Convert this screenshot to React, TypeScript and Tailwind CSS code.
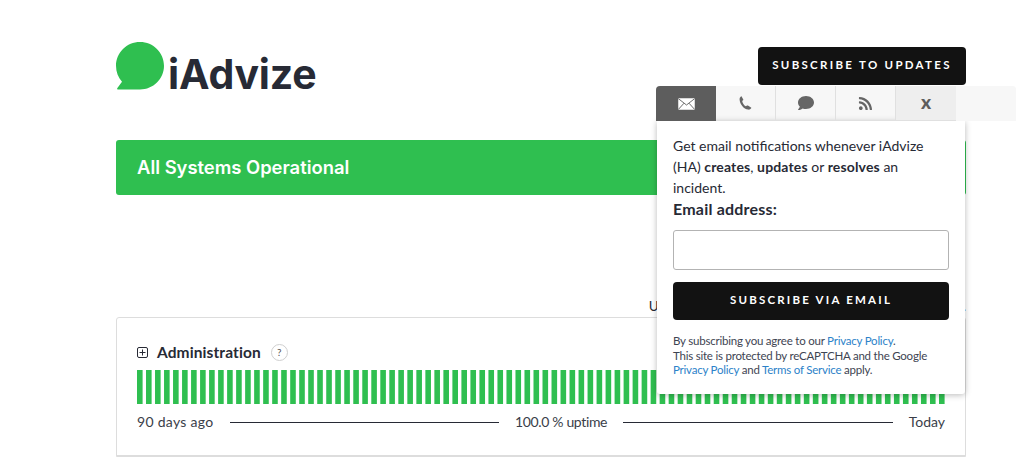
import React from "react";
import { FaComment, FaRss } from "react-icons/fa";

const bars = Array.from({ length: 90 }, (_, i) => i);

function Mail() {
  return (
    <svg width="17" height="12" viewBox="0 0 17 12" fill="none">
      <rect x="0.25" y="0.25" width="16.5" height="11.5" fill="#fff" />
      <path d="M0.3 0.6 L8.5 7 L16.7 0.6 M0.3 11.5 L6 5.2 M16.7 11.5 L11 5.2" stroke="#5d5d5d" strokeWidth="0.9" />
    </svg>
  );
}

function Phone() {
  return (
    <svg width="13" height="14" viewBox="0 0 13 14" fill="#666">
      <path d="M2.6 0.4 L4.3 3.4 C4.4 3.7 4.3 4 4 4.2 L3.2 4.9 C3.4 6.9 5 9.4 6.9 10.3 L8 9.6 C8.3 9.4 8.6 9.4 8.9 9.6 L12 11.5 C12.3 11.7 12.4 12 12.2 12.3 C11.4 13.3 10.4 13.8 9.2 13.6 C4.6 13 0.8 7.9 0.6 3.4 C0.5 2.2 1 1.2 1.9 0.4 C2.1 0.2 2.4 0.2 2.6 0.4 Z" />
    </svg>
  );
}

function Logo() {
  return (
    <div className="flex items-end">
      <svg width="48" height="48" viewBox="0 0 48 48" className="shrink-0">
        <path d="M24 0 C37.3 0 48 10.6 48 23.8 C48 37 37.3 47.5 24 47.5 L2.2 47.5 C1.2 47.5 0.8 46.6 1.4 45.9 L6 39.7 C2.2 35.5 0 30 0 23.8 C0 10.6 10.7 0 24 0 Z" fill="#2fbf50" />
      </svg>
      <span className="ml-[4px] mb-[-4px] font-['Inter',sans-serif] text-[41px] font-bold leading-[40px] tracking-[-0.2px] text-[#272a35]">iAdvize</span>
    </div>
  );
}

function Popover() {
  return (
    <div className="absolute right-0 top-[40px] z-10 w-[310px] pt-[4px]">
      <div className="flex h-[35px] w-[360px] rounded-t-[4px] bg-[#f7f7f7]">
        <div className="flex w-[60px] items-center justify-center rounded-tl-[4px] bg-[#5d5d5d]"><Mail /></div>
        <div className="flex w-[60px] items-center justify-center border-r border-b border-[#e0e0e0]"><Phone /></div>
        <div className="flex w-[60px] items-center justify-center border-r border-b border-[#e0e0e0] text-[#666]"><FaComment size={16} /></div>
        <div className="flex w-[60px] items-center justify-center border-r border-b border-[#e0e0e0] text-[#666]"><FaRss size={15} /></div>
        <div className="flex w-[60px] items-center justify-center border-b border-[#e0e0e0] bg-[#eeeeee] pb-[3px] text-[19px] font-black leading-none text-[#5d5d5d]">x</div>
        <div className="flex-1 rounded-tr-[4px] bg-[#f7f7f7]" />
      </div>
      <div className="ml-[1px] h-[273px] w-[308px] rounded-b-[3px] bg-white px-[16px] pt-[14px] text-[#272a35] shadow-[0_1px_6px_rgba(0,0,0,0.28)]">
        <p className="text-[14px] leading-[21px]">
          Get email notifications whenever iAdvize (HA) <b className="font-bold tracking-[0.15px]">creates</b>, <b className="font-bold tracking-[0.15px]">updates</b> or <b className="font-bold tracking-[0.15px]">resolves</b> an incident.
        </p>
        <label className="block text-[16px] font-bold leading-[21px] tracking-[0.2px]">Email address:</label>
        <div className="mt-[11px] h-[40px] rounded-[3px] border border-[#b3b3b3] bg-white" />
        <button className="mt-[12px] h-[38px] w-full rounded-[4px] bg-[#121212] pb-[2px] text-[11.5px] font-bold tracking-[2.2px] text-white">SUBSCRIBE VIA EMAIL</button>
        <p className="mt-[14px] text-[11.5px] leading-[14.5px] tracking-[-0.22px] text-[#3e4452]">
          By subscribing you agree to our <span className="text-[#2c82c9]">Privacy Policy</span>.<br />
          This site is protected by reCAPTCHA and the Google<br />
          <span className="text-[#2c82c9]">Privacy Policy</span> and <span className="text-[#2c82c9]">Terms of Service</span> apply.
        </p>
      </div>
    </div>
  );
}

export default function App() {
  return (
    <div className="h-[458px] w-[1017px] overflow-hidden bg-white font-['Lato',sans-serif] text-[#272a35]">
      <div className="ml-[116px] w-[850px] pt-[42px]">
        <header className="relative flex items-start justify-between">
          <Logo />
          <div className="mt-[5px]">
            <button className="h-[38px] w-[208px] rounded-[4px] bg-[#121212] pb-[2px] text-[11.5px] font-bold tracking-[2.3px] text-white">SUBSCRIBE TO UPDATES</button>
          </div>
          <Popover />
        </header>

        <div className="mt-[50px] flex h-[55px] items-center rounded-[3px] bg-[#2fbf50] px-[21px] font-['Inter',sans-serif] text-[18.4px] font-semibold text-white">All Systems Operational</div>

        <div className="mt-[100px] h-[22px] text-right text-[13.6px] leading-[22px]">Uptime over the past 90 days. View historical uptime.</div>

        <div className="rounded-t-[3px] border border-[#dddddd]">
          <div className="h-[138px] border-b border-[#dddddd] px-[20px] pt-[24px]">
            <div className="flex h-[21px] items-center">
              <svg width="11" height="11" viewBox="0 0 11 11" fill="none" stroke="#272a35" strokeWidth="1" className="mr-[9px]">
                <rect x="0.5" y="0.5" width="10" height="10" rx="1.5" />
                <path d="M5.5 2.5 V8.5 M2.5 5.5 H8.5" />
              </svg>
              <span className="text-[15.5px] font-bold leading-[21px] tracking-[0.1px] mt-[-1px]">Administration</span>
              <span className="ml-[10px] flex h-[17px] w-[17px] items-center justify-center rounded-full border border-[#cfcfcf] text-[10px] text-[#555]">?</span>
            </div>
            <svg width="808" height="34" viewBox="0 0 808 34" className="mt-[7px] block">
              {bars.map((i) => (
                <rect key={i} x={i * 9.0112} y="0" width="5.6" height="34" fill="#2fbf50" />
              ))}
            </svg>
            <div className="mt-[9px] flex h-[18px] items-center text-[14px] leading-[18px] text-[#3a3e49]">
              <span className="tracking-[0.3px]">90 days ago</span>
              <div className="mx-[16px] h-px flex-1 bg-[#272a35]" />
              <span className="tracking-[-0.35px]">100.0 % uptime</span>
              <div className="mx-[16px] h-px flex-1 bg-[#272a35]" />
              <span>Today</span>
            </div>
          </div>
        </div>
      </div>
    </div>
  );
}
